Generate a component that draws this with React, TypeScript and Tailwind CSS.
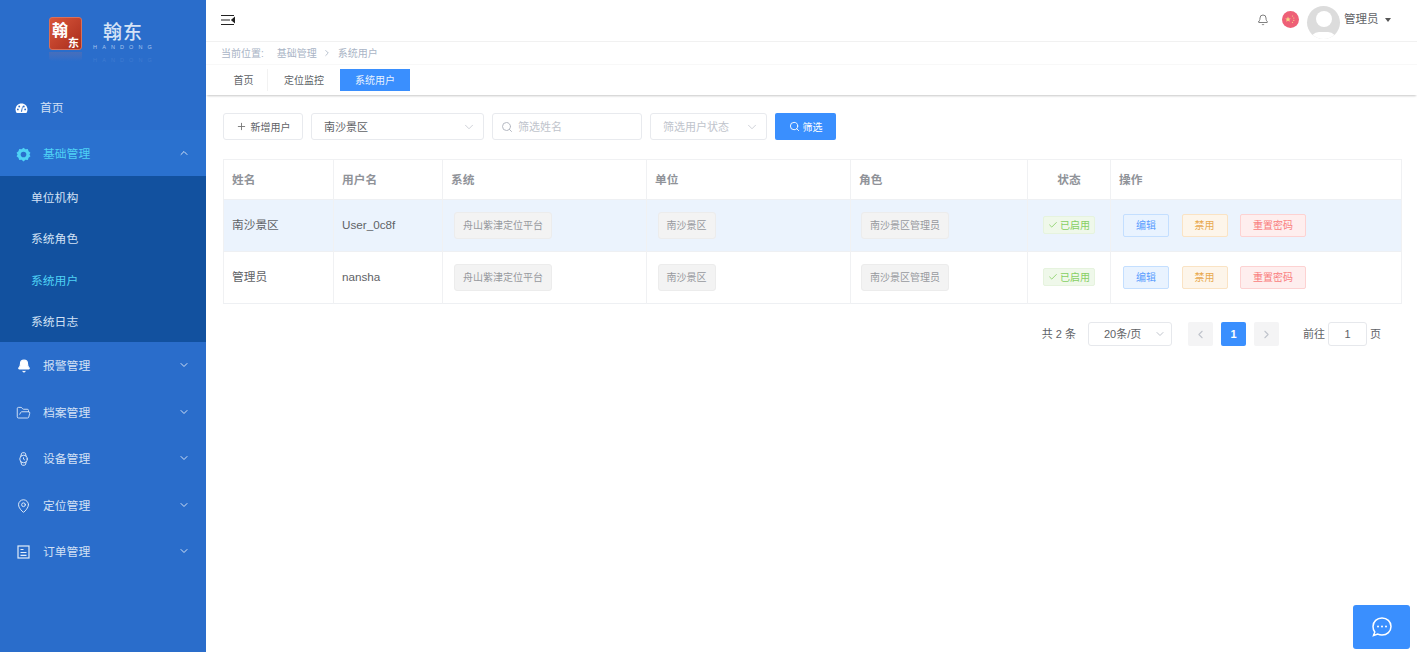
import React from "react";
import { ChevronDown, ChevronUp, Plus, Search, Check, ChevronLeft, ChevronRight, Bell, FolderOpen, Watch, MapPin } from "lucide-react";

const font = { fontFamily: '"Liberation Sans", "Noto Sans CJK SC", sans-serif' };

function Gauge() {
  return (
    <svg width="13" height="11" viewBox="0 0 14 12" fill="#fff">
      <path d="M7 0.5C3.2 0.5 0.5 3.4 0.5 7c0 1.5.5 2.9 1.2 4h10.6c.7-1.1 1.2-2.5 1.2-4 0-3.6-2.7-6.500-6.500-6.500z" />
      <circle cx="3" cy="7" r="1" fill="#2a6dcb" />
      <circle cx="4.500" cy="3.800" r="1" fill="#2a6dcb" />
      <circle cx="9.500" cy="3.800" r="1" fill="#2a6dcb" />
      <circle cx="11" cy="7" r="1" fill="#2a6dcb" />
      <path d="M6.300 9.500L7.800 3.500l.6.2-.8 5.800z" fill="#2a6dcb" />
    </svg>
  );
}

function Gear() {
  return (
    <svg width="15" height="15" viewBox="0 0 24 24" fill="none">
      <path d="M12 1l3 2.500 3.900-.4 1.200 3.700 3 2.500L21.500 12l1.600 2.700-3 2.500-1.200 3.700-3.900-.4L12 23l-3-2.500-3.900.4-1.200-3.700-3-2.500L2.500 12 .9 9.300l3-2.500 1.200-3.700 3.900.4z" fill="#4fd2f5" />
      <circle cx="12" cy="12" r="4.500" fill="#2a6fcd" />
    </svg>
  );
}

function Doc() {
  return (
    <svg width="13" height="14" viewBox="0 0 13 14" fill="none" stroke="#e3edf9" strokeWidth="1.200">
      <rect x="1" y="1" width="11" height="12" />
      <path d="M3.500 4.500h3M3.500 7.500h6M3.500 10.300h6" />
    </svg>
  );
}

function Collapse() {
  return (
    <svg width="14" height="12" viewBox="0 0 14 12" fill="none" stroke="#222" strokeWidth="1.200">
      <path d="M0 1.500h13M0 6h9M0 10.500h13" />
      <path d="M13.500 3.800L10.800 6l2.700 2.200z" fill="#222" />
    </svg>
  );
}

function Flag() {
  return (
    <svg width="17" height="17" viewBox="0 0 17 17">
      <circle cx="8.500" cy="8.500" r="8.500" fill="#ee6077" />
      <path d="M6 5.500l.8 1.900 2 .1-1.500 1.300.5 2-1.800-1.100-1.800 1.100.5-2L3.200 7.500l2-.1z" fill="#f6d58a" />
      <circle cx="10.500" cy="5" r=".6" fill="#f6d58a" />
      <circle cx="11.800" cy="7" r=".6" fill="#f6d58a" />
      <circle cx="11.800" cy="9.300" r=".6" fill="#f6d58a" />
      <circle cx="10.500" cy="11.300" r=".6" fill="#f6d58a" />
    </svg>
  );
}

function Chat() {
  return (
    <svg width="22" height="20" viewBox="0 0 22 20" fill="none" stroke="#fff" strokeWidth="1.500">
      <path d="M11 1c5 0 9 3.600 9 8.500S16 18 11 18c-1.600 0-3 -.3-4.200-.9L2.500 18.500l1.300-3.600C2.500 13.500 2 11.500 2 9.500 2 4.600 6 1 11 1z" />
      <circle cx="7" cy="9.500" r="1" fill="#fff" stroke="none" />
      <circle cx="11" cy="9.500" r="1" fill="#fff" stroke="none" />
      <circle cx="15" cy="9.500" r="1" fill="#fff" stroke="none" />
    </svg>
  );
}

function Logo() {
  return (
    <div className="flex h-[86px] items-start pl-[49px] pt-[17px]">
      <div>
        <div className="relative h-[33px] w-[33px] rounded-[3px] border border-[#d8705a] bg-gradient-to-br from-[#d9563a] to-[#a92c1c] font-bold text-white" style={{ fontFamily: '"Noto Sans CJK SC", sans-serif' }}>
          <span className="absolute left-[2px] top-[1px] text-[16px] leading-[20px]">翰</span>
          <span className="absolute right-[2px] bottom-[1px] text-[11px] leading-[12px]">东</span>
        </div>
        <div className="mt-[2px] h-[9px] w-[33px] rounded-b-[3px] bg-gradient-to-b from-[#5a6fb0] to-[#2a6dcb] opacity-60" />
      </div>
      <div className="ml-[11px] flex w-[64px] flex-col items-center pt-[3px]">
        <span className="-ml-[4px] text-[19px] leading-[22px] font-medium tracking-[1px] text-[#d5e3f6]" style={{ fontFamily: '"Noto Sans CJK SC", sans-serif' }}>翰东</span>
        <span className="mt-[2px] whitespace-nowrap text-[5.500px] leading-[7px] tracking-[5.100px] text-[#a9c5ec]">HANDONG</span>
        <span className="mt-[6px] whitespace-nowrap text-[5.500px] leading-[7px] tracking-[5.100px] text-[#3f7bd1]">HANDONG</span>
      </div>
    </div>
  );
}

function MenuRow({ icon, label, open, active }: { icon: React.ReactNode; label: string; open?: boolean; active?: boolean }) {
  return (
    <div className={`flex items-center pl-[16px] pr-[16px] ${active ? "h-[46px] bg-[#2a71cf] text-[#4fd2f5]" : "h-[46.500px] text-[#d3e1f5]"}`}>
      <span className="flex w-[15px] justify-center pt-[2px]">{icon}</span>
      <span className="ml-[12px] flex-1 pt-[4px] text-[11.800px]">{label}</span>
      {open ? <ChevronUp size={12} color="#d3e1f5" /> : <ChevronDown size={12} color="#d3e1f5" />}
    </div>
  );
}

function Sidebar() {
  const sub = ["单位机构", "系统角色", "系统用户", "系统日志"];
  return (
    <aside className="flex h-[652px] w-[206px] shrink-0 flex-col bg-[#2a6dcb]">
      <Logo />
      <div className="flex h-[44px] items-center pl-[15px] text-[#d3e1f5]">
        <Gauge />
        <span className="ml-[12px] pt-[1px] text-[11.800px]">首页</span>
      </div>
      <MenuRow icon={<Gear />} label="基础管理" open active />
      <div className="bg-[#12519f]">
        {sub.map((s) => (
          <div key={s} className={`flex h-[41.500px] items-center pl-[31px] pt-[4px] text-[11.800px] ${s === "系统用户" ? "text-[#4fd2f5]" : "text-[#d3e1f5]"}`}>
            {s}
          </div>
        ))}
      </div>
      <MenuRow icon={<Bell size={14} fill="#fff" color="#fff" />} label="报警管理" />
      <MenuRow icon={<FolderOpen size={16} color="#e3edf9" strokeWidth={1.400} />} label="档案管理" />
      <MenuRow icon={<Watch size={16} color="#e3edf9" strokeWidth={1.500} />} label="设备管理" />
      <MenuRow icon={<MapPin size={16} color="#e3edf9" strokeWidth={1.500} />} label="定位管理" />
      <MenuRow icon={<Doc />} label="订单管理" />
    </aside>
  );
}

function Header() {
  return (
    <header className="flex h-[42px] items-center justify-between border-b border-[#f1f1f1] pb-[2px] pl-[15px] pr-[26px]">
      <Collapse />
      <div className="flex items-center">
        <Bell size={12} color="#555" strokeWidth={1.500} />
        <span className="ml-[13px] flex"><Flag /></span>
        <div className="relative ml-[8px] mt-[5px] h-[33px] w-[33px] overflow-hidden rounded-full bg-[#dcdcdc]">
          <div className="absolute left-[8.500px] top-[5px] h-[16px] w-[16px] rounded-full bg-white" />
          <div className="absolute left-[3px] top-[26px] h-[18px] w-[27px] rounded-full bg-white" />
        </div>
        <span className="ml-[4px] pt-[1px] text-[11.500px] text-[#606266]">管理员</span>
        <span className="ml-[6.500px] h-0 w-0 border-x-[3.500px] border-t-[4px] border-x-transparent border-t-[#555]" />
      </div>
    </header>
  );
}

function Crumbs() {
  return (
    <div className="flex h-[23px] items-center border-b border-[#f8f8f8] pl-[15px] text-[10px] text-[#a9b4c5]">
      <span>当前位置:</span>
      <span className="ml-[13px]">基础管理</span>
      <ChevronRight size={10} className="mx-[5.500px]" />
      <span>系统用户</span>
    </div>
  );
}

function Tabs() {
  return (
    <div className="relative flex h-[30px] items-end pb-[4px] pl-[14px] text-[10px] text-[#5c5f66] shadow-[0_2px_2px_-1px_rgba(0,0,0,0.22)]">
      <div className="flex h-[22px] w-[48px] items-center justify-center border-r border-[#f2f2f2]">首页</div>
      <div className="flex h-[22px] w-[72px] items-center justify-center">定位监控</div>
      <div className="flex h-[22px] w-[70px] items-center justify-center bg-[#3a8ffe] text-[#e8f2ff]">系统用户</div>
    </div>
  );
}

function Toolbar() {
  const box = "flex h-[27px] items-center rounded-[3px] border border-[#e8eaee] bg-white";
  return (
    <div className="flex items-center pl-[17px] pt-[18px]">
      <div className={`${box} w-[80px] justify-center text-[10px] text-[#606266]`}>
        <Plus size={11} color="#777" className="mr-[4px]" /><span className="pt-[2px]">新增用户</span>
      </div>
      <div className={`${box} ml-[8px] w-[173px] justify-between pl-[12px] pr-[7px] text-[11px] text-[#606266]`}>
        <span className="pt-[2px]">南沙景区</span><ChevronDown size={14} color="#c0c4cc" strokeWidth={1.300} />
      </div>
      <div className={`${box} ml-[8px] w-[150px] pl-[8px] text-[11px] text-[#c0c4cc]`}>
        <Search size={12} color="#b5b9c2" className="mr-[5px]" /><span className="pt-[2px]">筛选姓名</span>
      </div>
      <div className={`${box} ml-[8px] w-[117px] justify-between pl-[12px] pr-[7px] text-[11px] text-[#c0c4cc]`}>
        <span className="pt-[2px]">筛选用户状态</span><ChevronDown size={14} color="#c0c4cc" strokeWidth={1.300} />
      </div>
      <div className="ml-[8px] flex h-[27px] w-[61px] items-center justify-center rounded-[2px] bg-[#3a8ffe] text-[10px] text-white">
        <Search size={11} className="mr-[3px]" /><span className="pt-[2px]">筛选</span>
      </div>
    </div>
  );
}

function Tag({ children }: { children: React.ReactNode }) {
  return (
    <span className="inline-flex h-[27px] items-center rounded-[3px] border border-[#ececec] bg-[#f3f3f3] px-[8px] text-[10px] text-[#97999e]">
      {children}
    </span>
  );
}

function ActionBtn({ label, cls, w }: { label: string; cls: string; w: string }) {
  return <span className={`inline-flex h-[23px] items-center justify-center rounded-[2px] border text-[10px] ${cls} ${w}`}>{label}</span>;
}

function Table() {
  const th = "border-r border-[#f0f1f3] align-middle text-[11.700px] font-bold text-[#909399]";
  const td = "border-r border-[#f0f1f3] align-middle text-[11.700px] text-[#606266]";
  const rows = [
    { name: "南沙景区", user: "User_0c8f", role: "南沙景区管理员", bg: "bg-[#ebf3fd]" },
    { name: "管理员", user: "nansha", role: "南沙景区管理员", bg: "bg-white" },
  ];
  return (
    <div className="pl-[17px] pt-[19px]">
      <table className="w-[1178px] table-fixed border-collapse border border-[#f0f1f3]">
        <colgroup>
          <col className="w-[110px]" />
          <col className="w-[109px]" />
          <col className="w-[204px]" />
          <col className="w-[204px]" />
          <col className="w-[177px]" />
          <col className="w-[83px]" />
          <col className="w-[291px]" />
        </colgroup>
        <thead>
          <tr className="h-[40px] border-b border-[#eef0f3]">
            <th className={`${th} pl-[8px] text-left`}>姓名</th>
            <th className={`${th} pl-[8px] text-left`}>用户名</th>
            <th className={`${th} pl-[8px] text-left`}>系统</th>
            <th className={`${th} pl-[8px] text-left`}>单位</th>
            <th className={`${th} pl-[8px] text-left`}>角色</th>
            <th className={`${th} text-center`}>状态</th>
            <th className={`${th} pl-[8px] text-left`}>操作</th>
          </tr>
        </thead>
        <tbody>
          {rows.map((r) => (
            <tr key={r.name} className={`h-[52px] border-b border-[#eef0f3] ${r.bg}`}>
              <td className={`${td} pb-[1px] pl-[8px]`}>{r.name}</td>
              <td className={`${td} pb-[1px] pl-[8px]`}>{r.user}</td>
              <td className={`${td} pl-[11px]`}><Tag>舟山紫津定位平台</Tag></td>
              <td className={`${td} pl-[10.500px]`}><Tag>南沙景区</Tag></td>
              <td className={`${td} pl-[10px]`}><Tag>南沙景区管理员</Tag></td>
              <td className={`${td} text-center`}>
                <span className="inline-flex h-[18px] items-center rounded-[2px] border border-[#e6f3de] bg-[#eff8ea] px-[4px] text-[10px] text-[#86cf63]">
                  <Check size={10} className="mr-[2px]" />已启用
                </span>
              </td>
              <td className={`${td} pl-[12px]`}>
                <div className="flex gap-[12.500px]">
                  <ActionBtn label="编辑" w="w-[46px]" cls="border-[#c4dfff] bg-[#e9f3ff] text-[#5a9dfe]" />
                  <ActionBtn label="禁用" w="w-[46px]" cls="border-[#fae3c4] bg-[#fdf5ea] text-[#e8a94f]" />
                  <ActionBtn label="重置密码" w="w-[66px]" cls="border-[#fdd2d2] bg-[#feeeee] text-[#f97d7d]" />
                </div>
              </td>
            </tr>
          ))}
        </tbody>
      </table>
    </div>
  );
}

function Pager() {
  return (
    <div className="flex items-center justify-end pr-[36px] pt-[18px] text-[11px] text-[#606266]">
      <span>共 2 条</span>
      <div className="ml-[12px] flex h-[24px] w-[84px] items-center justify-between rounded-[3px] border border-[#e6e8ec] pl-[15px] pr-[5px]">
        20条/页<ChevronDown size={12} color="#c0c4cc" />
      </div>
      <div className="ml-[16px] flex h-[24px] w-[25px] items-center justify-center rounded-[2px] bg-[#f4f4f5]"><ChevronLeft size={13} color="#c0c4cc" /></div>
      <div className="ml-[8px] flex h-[24px] w-[25px] items-center justify-center rounded-[2px] bg-[#3a8ffe] font-bold text-white">1</div>
      <div className="ml-[8px] flex h-[24px] w-[25px] items-center justify-center rounded-[2px] bg-[#f4f4f5]"><ChevronRight size={13} color="#c0c4cc" /></div>
      <span className="ml-[24px]">前往</span>
      <div className="mx-[3px] flex h-[24px] w-[39px] items-center justify-center rounded-[3px] border border-[#e6e8ec]">1</div>
      <span>页</span>
    </div>
  );
}

export default function App() {
  return (
    <div className="relative flex h-[652px] w-[1417px] overflow-hidden bg-white" style={font}>
      <Sidebar />
      <main className="min-w-0 flex-1">
        <Header />
        <Crumbs />
        <Tabs />
        <Toolbar />
        <Table />
        <Pager />
      </main>
      <div className="absolute bottom-[3px] right-[7px] flex h-[44px] w-[57px] items-center justify-center rounded-[3px] bg-[#3a8ffe]">
        <Chat />
      </div>
    </div>
  );
}
